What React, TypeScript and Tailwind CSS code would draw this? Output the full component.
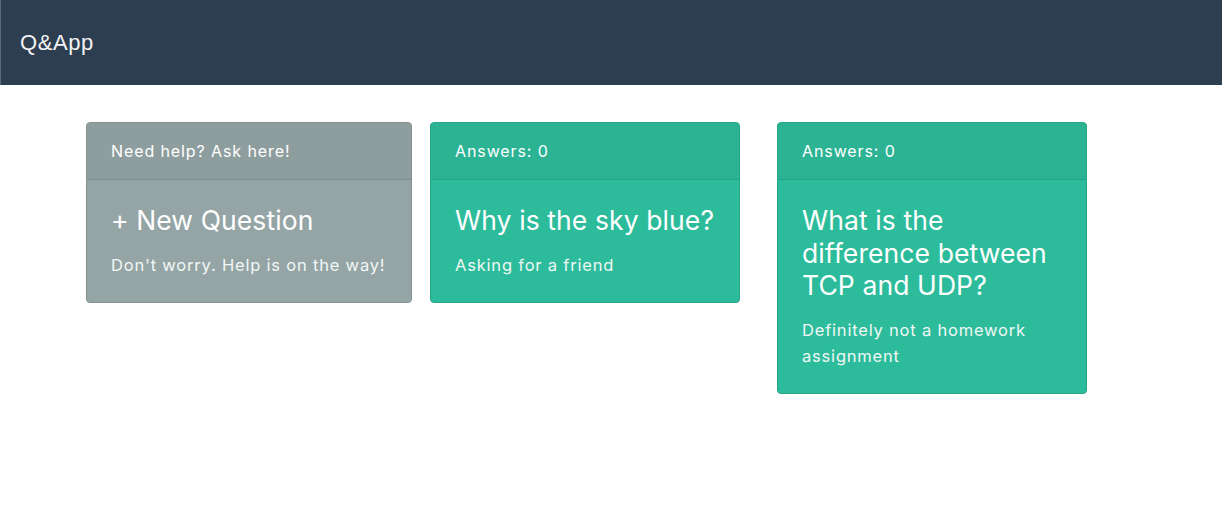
import React from "react";

type CardProps = {
  header: string;
  title: string;
  text: string;
  variant: "gray" | "green";
};

function Card({ header, title, text, variant }: CardProps) {
  const isGray = variant === "gray";
  return (
    <div
      className={
        "rounded-[4px] border text-white " +
        (isGray ? "bg-[#95a5a6] border-[#83918f]" : "bg-[#2dbc9b] border-[#26a587]")
      }
    >
      <div
        className={
          "px-6 py-4 text-[16px] leading-6 tracking-[0.9px] border-b " +
          (isGray ? "bg-[#8e9d9e] border-[#7f8c8d]" : "bg-[#2bb394] border-[#27a487]")
        }
      >
        {header}
      </div>
      <div className="px-6 pt-6 pb-6">
        <div className="text-[26.5px] leading-[32.5px] tracking-[0.1px]">{title}</div>
        <div className="mt-[15px] text-[16.5px] leading-[26px] tracking-[0.8px] text-[#f1f7f5]">{text}</div>
      </div>
    </div>
  );
}

export default function App() {
  return (
    <div
      className="min-h-[522px] bg-white"
      style={{ fontFamily: "Inter, 'Helvetica Neue', Arial, sans-serif" }}
    >
      <nav className="h-[85px] bg-[#2c3e50] flex items-center pl-[19px] pr-5 border-l border-[#5b6b7a]">
        <span
          className="text-[22px] tracking-[0.6px] text-[#f2f2f2]"
          style={{ fontFamily: "'Liberation Sans', Arial, sans-serif" }}
        >
          Q&amp;App
        </span>
      </nav>
      <div className="flex items-start pt-[37px] pl-[86px]">
        <div className="w-[326px]">
          <Card
            variant="gray"
            header="Need help? Ask here!"
            title="+ New Question"
            text="Don't worry. Help is on the way!"
          />
        </div>
        <div className="w-[310px] ml-[18px]">
          <Card
            variant="green"
            header="Answers: 0"
            title="Why is the sky blue?"
            text="Asking for a friend"
          />
        </div>
        <div className="w-[310px] ml-[37px]">
          <Card
            variant="green"
            header="Answers: 0"
            title="What is the difference between TCP and UDP?"
            text="Definitely not a homework assignment"
          />
        </div>
      </div>
    </div>
  );
}
